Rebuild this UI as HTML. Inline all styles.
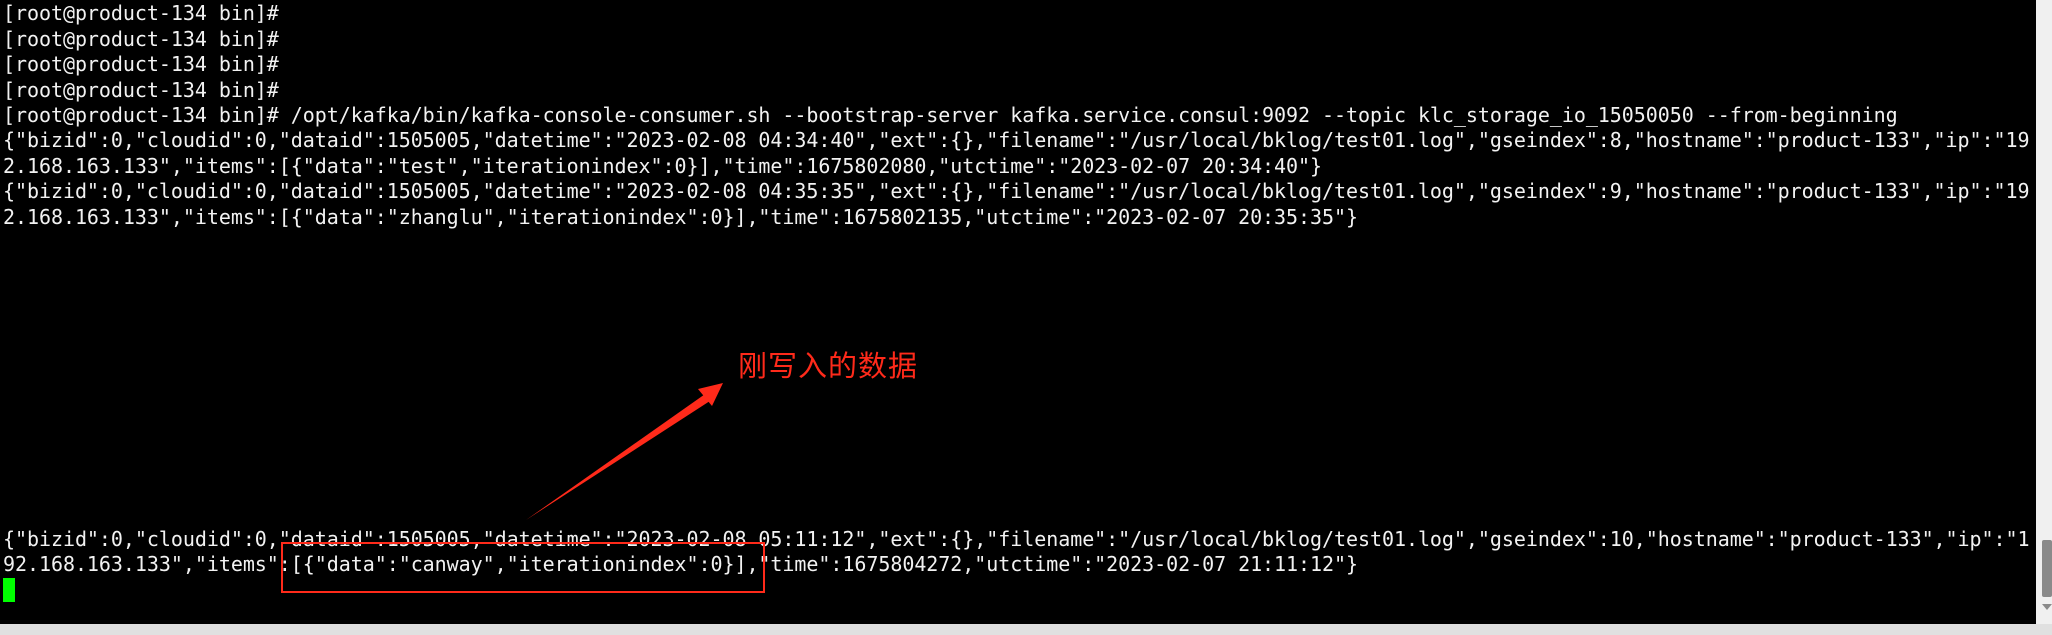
<!DOCTYPE html>
<html><head><meta charset="utf-8"><style>
html,body{margin:0;padding:0;width:2052px;height:635px;overflow:hidden;background:#000;position:relative}
pre{margin:0;position:absolute;left:3px;font-family:"DejaVu Sans Mono","Liberation Mono",monospace;font-size:20px;line-height:25.4px;color:#f2f2f2;white-space:pre;letter-spacing:-0.05px}
</style></head><body>
<pre style="top:-24px">[root@product-134 bin]#
[root@product-134 bin]#
[root@product-134 bin]#
[root@product-134 bin]#
[root@product-134 bin]#
[root@product-134 bin]# /opt/kafka/bin/kafka-console-consumer.sh --bootstrap-server kafka.service.consul:9092 --topic klc_storage_io_15050050 --from-beginning
{"bizid":0,"cloudid":0,"dataid":1505005,"datetime":"2023-02-08 04:34:40","ext":{},"filename":"/usr/local/bklog/test01.log","gseindex":8,"hostname":"product-133","ip":"19
2.168.163.133","items":[{"data":"test","iterationindex":0}],"time":1675802080,"utctime":"2023-02-07 20:34:40"}
{"bizid":0,"cloudid":0,"dataid":1505005,"datetime":"2023-02-08 04:35:35","ext":{},"filename":"/usr/local/bklog/test01.log","gseindex":9,"hostname":"product-133","ip":"19
2.168.163.133","items":[{"data":"zhanglu","iterationindex":0}],"time":1675802135,"utctime":"2023-02-07 20:35:35"}</pre>
<pre style="top:527px">{"bizid":0,"cloudid":0,"dataid":1505005,"datetime":"2023-02-08 05:11:12","ext":{},"filename":"/usr/local/bklog/test01.log","gseindex":10,"hostname":"product-133","ip":"1
92.168.163.133","items":[{"data":"canway","iterationindex":0}],"time":1675804272,"utctime":"2023-02-07 21:11:12"}</pre>
<div style="position:absolute;left:3px;top:578px;width:12px;height:24px;background:#00ff00"></div>
<div style="position:absolute;left:281px;top:542px;width:480px;height:47px;border:2px solid #ff2a1a"></div>
<svg style="position:absolute;left:0;top:0" width="2052" height="635">
<polygon points="526,520 708,392 713,399" fill="#ff2a1a"/>
<polygon points="723,383 698,389 712,406" fill="#ff2a1a"/>
</svg>
<div style="position:absolute;left:738px;top:346px;font-family:'Noto Sans CJK SC',sans-serif;font-size:29px;line-height:36px;color:#ff2a1a;letter-spacing:1px">刚写入的数据</div>
<div style="position:absolute;left:2036px;top:0;width:16px;height:624px;background:#f0f0f0"></div>
<div style="position:absolute;left:2042px;top:540px;width:10px;height:57px;background:#8a8a8a;border-radius:2px"></div>
<div style="position:absolute;left:2042px;top:604px;width:0;height:0;border-left:5px solid transparent;border-right:5px solid transparent;border-top:6px solid #8a8a8a"></div>
<div style="position:absolute;left:0;top:624px;width:2052px;height:11px;background:#e0e0e0"></div>
</body></html>
